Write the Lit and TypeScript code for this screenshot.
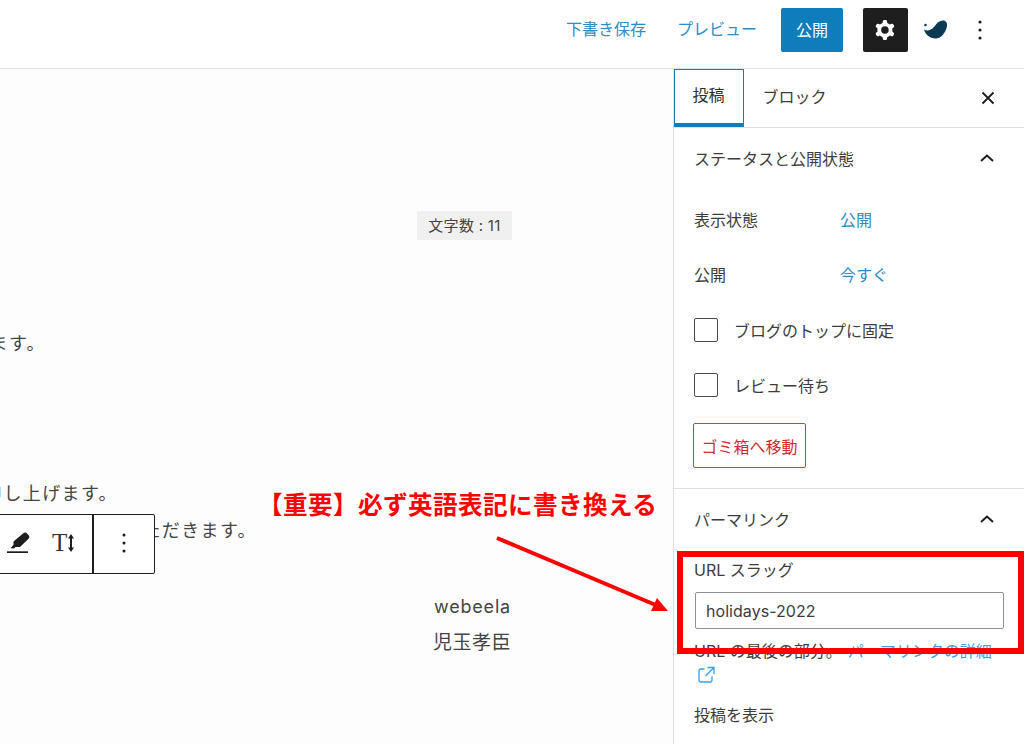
import { LitElement, html, css, svg } from "lit";
import { customElement } from "lit/decorators.js";

const chevron = html`<svg class="chev" viewBox="0 0 24 24"><path d="M6 15 12 9.500 18 15" fill="none" stroke="#1e1e1e" stroke-width="2"/></svg>`;

@customElement("app-root")
export class AppRoot extends LitElement {
  static styles = css`
    :host { display: block; width: 1024px; height: 744px; position: relative; overflow: hidden; background: #fff;
      font-family: Inter, "Noto Sans CJK JP", sans-serif; font-size: 16px; color: #3c3c3c; }
    * { box-sizing: border-box; }
    header { height: 69px; border-bottom: 1px solid #e0e0e0; display: flex; align-items: center; justify-content: flex-end; padding-bottom: 8px; }
    .hlink { color: #2a8cc8; margin-bottom: 4px; }
    .save { margin-right: 31px; }
    .preview { margin-right: 24px; }
    .publish { width: 62px; height: 44px; background: #0f7cbb; color: #fff; border-radius: 2px; display: flex; align-items: center; justify-content: center; padding-bottom: 3px; margin-right: 20px; }
    .gear { width: 45px; height: 44px; background: #1e1e1e; border-radius: 2px; display: flex; align-items: center; justify-content: center; margin-right: 14px; }
    .gear svg { width: 30px; height: 30px; margin-left: -2px; }
    .logo { width: 26px; height: 20px; margin-right: 20px; display: block; }
    .dots { width: 24px; height: 30px; margin-right: 32px; display: block; }
    main { display: flex; height: 675px; }
    .editor { width: 673px; flex: none; overflow: hidden; background: #fdfdfd; color: #444; font-size: 18px; letter-spacing: 1.4px; padding-top: 142px; position: relative; }
    .pill { margin-left: 417px; width: 95px; height: 29px; background: #f0f0f0; color: #444; font-size: 15px; letter-spacing: .3px; display: flex; align-items: center; justify-content: center; padding-bottom: 2px; }
    .clip { display: flex; justify-content: flex-end; overflow: hidden; white-space: nowrap; height: 26px; line-height: 26px; }
    .c1 { width: 46px; margin-top: 91px; }
    .c2 { width: 118px; margin-top: 124px; }
    .c3 { width: 257px; margin-top: 11px; }
    .center { width: 944px; text-align: center; height: 26px; line-height: 26px; }
    .c4 { margin-top: 50px; letter-spacing: .8px; padding-left: 1px; }
    .c5 { margin-top: 10px; font-size: 19px; letter-spacing: .5px; }
    .toolbar { position: absolute; left: -4px; top: 445px; width: 159px; height: 60px; background: #fff; border: 1.5px solid #1e1e1e; border-radius: 2px; color: #1e1e1e; letter-spacing: 0; }
    .pen { position: absolute; left: 9px; top: 14px; width: 26px; height: 26px; }
    .tt { position: absolute; left: 55px; top: 12px; font-family: "Liberation Serif", serif; font-size: 25px; line-height: 32px; color: #333; }
    .arrows { position: absolute; left: 71px; top: 19px; width: 6px; height: 18px; }
    .div { position: absolute; left: 95px; top: 0; bottom: 0; width: 1.5px; background: #1e1e1e; }
    .tbdots { position: absolute; left: 115px; top: 13px; width: 24px; height: 30px; }
    aside { width: 351px; flex: none; border-left: 1px solid #e0e0e0; background: #fff; }
    .tabs { height: 59px; border-bottom: 1px solid #e0e0e0; display: flex; align-items: stretch; }
    .tab { display: flex; align-items: center; justify-content: center; padding-bottom: 5px; }
    .tab.on { width: 70px; border: 1.5px solid #0f7cbb; border-bottom: 4px solid #0f7cbb; color: #2f2f2f; padding-right: 1px; }
    .tab.off { width: 83px; margin-left: 9px; margin-right: auto; color: #3c3c3c; }
    .close { width: 24px; height: 24px; align-self: center; margin-right: 24px; }
    .sec { padding: 18px 20px 0; border-bottom: 1px solid #e0e0e0; }
    .sec.s1 { height: 361px; }
    .title { height: 24px; display: flex; justify-content: space-between; align-items: center; }
    .chev { width: 24px; height: 24px; margin-right: 5px; }
    .row { display: flex; height: 24px; align-items: center; }
    .row .k { width: 146px; }
    .row .v { color: #2a8cc8; }
    .r1 { margin-top: 37px; }
    .r2 { margin-top: 31px; }
    .check { display: flex; align-items: center; gap: 16px; height: 24px; margin-top: 31px; }
    .check.first { margin-top: 32px; }
    .box { width: 24px; height: 24px; border: 1.5px solid #4a4a4a; border-radius: 2px; background: #fff; }
    .trash { display: flex; align-items: center; justify-content: center; width: 113px; height: 45px; border: 1px solid #d93a3a; border-radius: 2px; color: #d42a2a; margin-top: 26px; margin-left: -1px; }
    .label { margin-top: 27px; height: 24px; line-height: 24px; }
    .input { margin-top: 10px; margin-left: 1px; width: 309px; height: 37px; border: 1.5px solid #8f8f8f; border-radius: 2px; display: flex; align-items: center; padding-left: 10px; font-size: 16px; color: #3c3c3c; letter-spacing: .05px; }
    .help { margin-top: 10px; height: 24px; line-height: 24px; white-space: nowrap; }
    .help a { color: #3a9ff0; margin-left: 6px; }
    .ext { display: block; width: 24px; height: 24px; }
    .view { margin-top: 16px; height: 24px; line-height: 24px; }
    .s2 { border-bottom: none; }
    .note { position: absolute; left: 258px; top: 487px; font-size: 24.6px; line-height: 36px; font-weight: 700; color: #f00; letter-spacing: .4px; white-space: nowrap; }
    .redbox { position: absolute; left: 677px; top: 551px; width: 347px; height: 103px; border: 6px solid #f00; }
    .arrow { position: absolute; left: 480px; top: 520px; width: 200px; height: 110px; }
  `;

  render() {
    return html`
      <header>
        <span class="hlink save">下書き保存</span>
        <span class="hlink preview">プレビュー</span>
        <span class="publish">公開</span>
        <span class="gear"><svg viewBox="0 0 24 24"><path fill="#fff" fill-rule="evenodd" d="M10.289 4.836A1 1 0 0111.275 4h1.306a1 1 0 01.987.836l.244 1.466c.787.26 1.503.679 2.108 1.218l1.393-.522a1 1 0 011.216.437l.653 1.13a1 1 0 01-.23 1.273l-1.148.944a6.025 6.025 0 010 2.435l1.149.946a1 1 0 01.23 1.272l-.653 1.13a1 1 0 01-1.216.437l-1.394-.522c-.605.54-1.32.958-2.108 1.218l-.244 1.466a1 1 0 01-.987.836h-1.306a1 1 0 01-.986-.836l-.244-1.466a5.995 5.995 0 01-2.108-1.218l-1.394.522a1 1 0 01-1.217-.436l-.653-1.131a1 1 0 01.23-1.272l1.149-.946a6.026 6.026 0 010-2.435l-1.148-.944a1 1 0 01-.23-1.272l.653-1.131a1 1 0 011.217-.437l1.393.522a5.994 5.994 0 012.108-1.218l.244-1.466zM14.929 12a3 3 0 11-6 0 3 3 0 016 0z"/></svg></span>
        <svg class="logo" viewBox="0 0 26 20"><path fill="#0b3b54" d="M2 9.500C7 12 11 9 14 4.500 16 1.500 19 .5 21 .5c3 0 4.500 2.500 4 5.500-1 6-5.500 12.500-11.500 12.500C8 18.500 3.500 15 2 9.500z"/><circle cx="3.500" cy="5" r="1.300" fill="#0b3b54"/></svg>
        <svg class="dots" viewBox="0 0 24 30"><circle cx="12" cy="7" r="1.600" fill="#1e1e1e"/><circle cx="12" cy="15" r="1.600" fill="#1e1e1e"/><circle cx="12" cy="23" r="1.600" fill="#1e1e1e"/></svg>
      </header>
      <main>
        <div class="editor">
          <div class="pill">文字数 : 11</div>
          <div class="clip c1"><span>ります。</span></div>
          <div class="clip c2"><span>お願い申し上げます。</span></div>
          <div class="clip c3"><span>させていただきます。</span></div>
          <div class="center c4">webeela</div>
          <div class="center c5">児玉孝臣</div>
          <div class="toolbar">
            <svg class="pen" viewBox="0 0 26 26"><path fill="#1e1e1e" d="M17 4.500c1.500-1.300 3-1.300 4 0l1.500 1.500c1.200 1.300 1 2.800-.2 4l-8.300 8H9.500L8 19.500l-3.500-.3 3-3.500v-3.200z"/><rect x="1" y="22.300" width="21" height="1.700" fill="#1e1e1e"/></svg>
            <span class="tt">T</span>
            <svg class="arrows" viewBox="0 0 6 18"><path fill="#1e1e1e" d="M3 0l3 4.500H4v9h2L3 18 0 13.500h2v-9H0z"/></svg>
            <span class="div"></span>
            <svg class="tbdots" viewBox="0 0 24 30"><circle cx="12" cy="7" r="1.500" fill="#1e1e1e"/><circle cx="12" cy="15" r="1.500" fill="#1e1e1e"/><circle cx="12" cy="23" r="1.500" fill="#1e1e1e"/></svg>
          </div>
        </div>
        <aside>
          <div class="tabs">
            <div class="tab on">投稿</div>
            <div class="tab off">ブロック</div>
            <svg class="close" viewBox="0 0 24 24"><path d="M6.500 6.500l11 11M17.500 6.500l-11 11" stroke="#1e1e1e" stroke-width="1.800" fill="none"/></svg>
          </div>
          <section class="sec s1">
            <div class="title"><span>ステータスと公開状態</span>${chevron}</div>
            <div class="row r1"><span class="k">表示状態</span><span class="v">公開</span></div>
            <div class="row r2"><span class="k">公開</span><span class="v">今すぐ</span></div>
            <label class="check first"><span class="box"></span><span>ブログのトップに固定</span></label>
            <label class="check"><span class="box"></span><span>レビュー待ち</span></label>
            <div class="trash">ゴミ箱へ移動</div>
          </section>
          <section class="sec s2">
            <div class="title"><span>パーマリンク</span>${chevron}</div>
            <div class="label">URL スラッグ</div>
            <div class="input">holidays-2022</div>
            <div class="help">URL の最後の部分。<a>パーマリンクの詳細</a></div>
            <svg class="ext" viewBox="0 0 24 24"><path d="M10.500 6H7a2 2 0 0 0-2 2v9a2 2 0 0 0 2 2h9a2 2 0 0 0 2-2v-3.500M13.500 4.500H20V11M20 4.500l-8.500 8.500" fill="none" stroke="#3a9ff0" stroke-width="1.300"/></svg>
            <div class="view">投稿を表示</div>
          </section>
        </aside>
      </main>
      <div class="note">【重要】必ず英語表記に書き換える</div>
      <div class="redbox"></div>
      <svg class="arrow" viewBox="0 0 200 110">${svg`<path d="M17 18 178 86" stroke="#f00" stroke-width="4" fill="none"/><path d="M188 91 171 91 177 78z" fill="#f00"/>`}</svg>
    `;
  }
}
